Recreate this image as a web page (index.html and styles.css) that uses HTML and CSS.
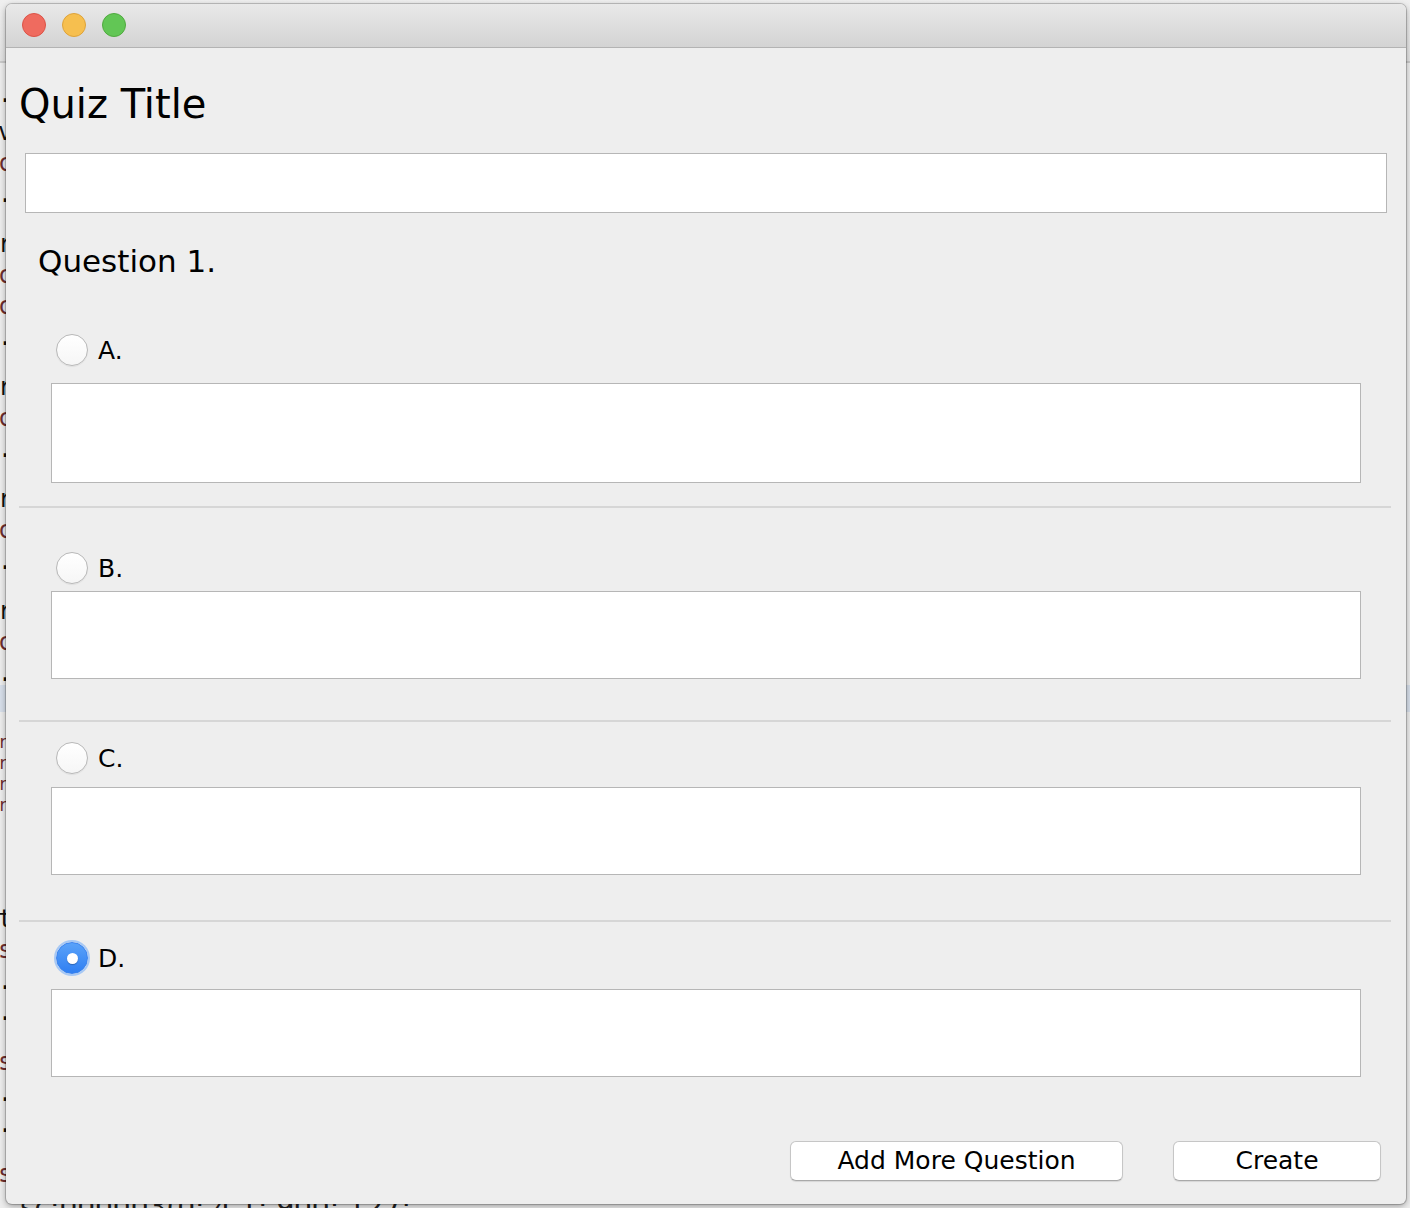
FILE: index.html
```html
<!DOCTYPE html>
<html lang="en">
<head>
<meta charset="utf-8">
<title>Quiz Creator</title>
<link rel="stylesheet" href="styles.css">
</head>
<body>
<div class="desktop">
  <div class="bg-window">
    <div class="bg-toolbar"></div>
    <div class="bg-code">
      <div class="ln k">·</div>
      <div class="ln k">v</div>
      <div class="ln r">c</div>
      <div class="ln k">.</div>
      <div class="ln gap k">r</div>
      <div class="ln r">c</div>
      <div class="ln r">c</div>
      <div class="ln k">.</div>
      <div class="ln gap k">r</div>
      <div class="ln r">c</div>
      <div class="ln k">.</div>
      <div class="ln gap k">r</div>
      <div class="ln r">c</div>
      <div class="ln k">.</div>
      <div class="ln gap k">r</div>
      <div class="ln r">c</div>
      <div class="ln k">.</div>
      <div class="ln hl"></div>
      <div class="ln sm r">r</div>
      <div class="ln sm r">r</div>
      <div class="ln sm r">r</div>
      <div class="ln sm r">r</div>
      <div class="ln gap2 k">t</div>
      <div class="ln r">s</div>
      <div class="ln k">.</div>
      <div class="ln k">.</div>
      <div class="ln gap r">s</div>
      <div class="ln k">.</div>
      <div class="ln k">.</div>
      <div class="ln gap r">s</div>
    </div>
    <div class="bg-bottom">sc:000003(0: 4,1: 900: 127:</div>
  </div>

  <div class="window">
    <div class="titlebar">
      <span class="light light-close"></span>
      <span class="light light-min"></span>
      <span class="light light-max"></span>
    </div>
    <div class="content">
      <h1 class="quiz-title">Quiz Title</h1>
      <input class="field title-field" type="text">

      <h2 class="question">Question 1.</h2>

      <section class="option opt-a">
        <label class="choice"><span class="radio"></span><span class="choice-label">A.</span></label>
        <input class="field answer answer-tall" type="text">
      </section>
      <hr class="sep sep-1">

      <section class="option opt-b">
        <label class="choice"><span class="radio"></span><span class="choice-label">B.</span></label>
        <input class="field answer" type="text">
      </section>
      <hr class="sep sep-2">

      <section class="option opt-c">
        <label class="choice"><span class="radio"></span><span class="choice-label">C.</span></label>
        <input class="field answer" type="text">
      </section>
      <hr class="sep sep-3">

      <section class="option opt-d">
        <label class="choice"><span class="radio radio-on"></span><span class="choice-label">D.</span></label>
        <input class="field answer" type="text">
      </section>

      <div class="actions">
        <button class="btn btn-add" type="button">Add More Question</button>
        <button class="btn btn-create" type="button">Create</button>
      </div>
    </div>
  </div>
</div>
</body>
</html>
```

FILE: styles.css
```css
* { box-sizing: border-box; }

html, body {
  margin: 0;
  padding: 0;
}

body {
  width: 1410px;
  height: 1208px;
  overflow: hidden;
  background: #e8e8e8;
  font-family: "DejaVu Sans", "Liberation Sans", sans-serif;
  color: #000;
}

.desktop {
  position: relative;
  width: 1410px;
  height: 1208px;
}

/* ---------- background window (only a sliver is visible) ---------- */
.bg-window {
  position: absolute;
  inset: 0;
  background: #ececec;
}

.bg-toolbar {
  height: 63px;
  border-bottom: 2px solid #c9c9c9;
  background: linear-gradient(#efefef, #e2e2e2);
}

.bg-code {
  padding-top: 23px;
  font-family: "DejaVu Sans Mono", "Liberation Mono", monospace;
  font-size: 24px;
}

.ln {
  height: 31px;
  line-height: 31px;
  margin-left: -2px;
}
.ln.gap { margin-top: 19px; }
.ln.gap2 { margin-top: 88px; }
.ln.sm { height: 21px; line-height: 21px; font-size: 17px; }
.ln.hl { height: 27px; background: #d6dee9; margin: -4px 0 20px 0; }
.k { color: #111; }
.r { color: #6d2c2c; }

.bg-bottom {
  position: absolute;
  left: 20px;
  top: 1192px;
  font-family: "DejaVu Sans", sans-serif;
  font-size: 28px;
  line-height: 32px;
  color: #222;
  white-space: nowrap;
}

/* ---------- main window ---------- */
.window {
  position: absolute;
  left: 6px;
  top: 4px;
  width: 1400px;
  height: 1200px;
  border-radius: 6px;
  overflow: hidden;
  background: #eeeeee;
  box-shadow: 0 0 0 1px rgba(0, 0, 0, 0.18), 0 2px 6px rgba(0, 0, 0, 0.35);
}

.titlebar {
  height: 44px;
  display: flex;
  align-items: center;
  gap: 16px;
  padding-left: 16px;
  padding-bottom: 1px;
  background: linear-gradient(#e9e9e9, #d3d3d3);
  border-bottom: 1px solid #b3b3b3;
}

.light {
  width: 24px;
  height: 24px;
  border-radius: 50%;
  display: block;
}
.light-close { background: #ef6b5f; border: 1px solid #dc5347; }
.light-min { background: #f6bf4f; border: 1px solid #dea33a; }
.light-max { background: #62c655; border: 1px solid #50aa3f; }

.content {
  padding-top: 32px;
  display: flex;
  flex-direction: column;
  align-items: flex-start;
}

.quiz-title {
  margin: 0 0 0 13px;
  font-size: 40px;
  line-height: 48px;
  font-weight: normal;
}

.field {
  display: block;
  margin: 0;
  padding: 0 8px;
  background: #fff;
  border: 1px solid #b6b6b6;
  border-radius: 0;
  font: inherit;
  font-size: 24px;
  outline: none;
}

.title-field {
  margin: 25px 0 0 19px;
  width: 1362px;
  height: 60px;
}

.question {
  margin: 28px 0 0 32px;
  font-size: 31px;
  line-height: 40px;
  font-weight: normal;
}

.option {
  display: flex;
  flex-direction: column;
  align-items: flex-start;
}

.choice {
  display: flex;
  align-items: center;
  gap: 10px;
  height: 32px;
  margin-left: 50px;
}

.choice-label {
  font-size: 25px;
  line-height: 32px;
  padding-top: 2px;
}

.radio {
  width: 32px;
  height: 32px;
  border-radius: 50%;
  border: 1px solid #b8b8b8;
  background: linear-gradient(#ffffff, #f6f6f6);
  box-shadow: 0 1px 1px rgba(0, 0, 0, 0.06);
  display: flex;
  align-items: center;
  justify-content: center;
}

.radio-on {
  border: 1px solid #3a83ef;
  background: linear-gradient(#5aa2f9, #2f7ff2);
  box-shadow: 0 0 0 2px rgba(110, 170, 250, 0.55);
}
.radio-on::after {
  content: "";
  width: 11px;
  height: 11px;
  border-radius: 50%;
  background: #fff;
  box-shadow: 0 1px 1px rgba(0, 0, 0, 0.25);
}

.answer {
  margin-left: 45px;
  width: 1310px;
  height: 88px;
}

.opt-a .choice { margin-top: 53px; }
.opt-a .answer { margin-top: 17px; }
.answer-tall { height: 100px; }

.opt-b .choice { margin-top: 44px; }
.opt-b .answer { margin-top: 7px; }

.opt-c .choice { margin-top: 20px; }
.opt-c .answer { margin-top: 13px; }

.opt-d .choice { margin-top: 20px; }
.opt-d .answer { margin-top: 15px; }

.sep {
  margin: 0 0 0 13px;
  width: 1372px;
  height: 2px;
  border: 0;
  background: #d6d6d6;
}
.sep-1 { margin-top: 23px; }
.sep-2 { margin-top: 41px; }
.sep-3 { margin-top: 45px; }

.actions {
  align-self: stretch;
  display: flex;
  justify-content: flex-end;
  gap: 50px;
  margin-top: 64px;
  padding-right: 25px;
}

.btn {
  height: 40px;
  margin: 0;
  padding: 0;
  background: #fff;
  border: 1px solid #c6c6c6;
  border-bottom-color: #a9a9a9;
  border-radius: 6px;
  box-shadow: 0 1px 1px rgba(0, 0, 0, 0.1);
  font-family: "DejaVu Sans", "Liberation Sans", sans-serif;
  font-size: 25px;
  color: #000;
  line-height: 38px;
}
.btn-add { width: 333px; }
.btn-create { width: 208px; }
```
